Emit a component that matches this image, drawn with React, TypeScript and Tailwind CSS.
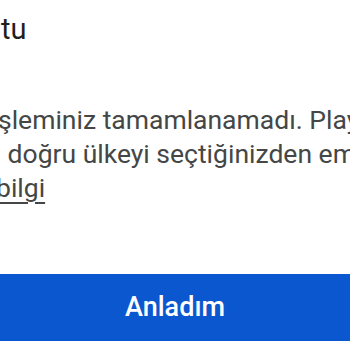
import React from "react";

function Line({
  prefix,
  rest,
  shift,
  className,
}: {
  prefix: string;
  rest: string;
  shift: string;
  className?: string;
}) {
  return (
    <div className={`flex whitespace-nowrap ${shift} ${className ?? ""}`}>
      <span className="w-0 shrink-0 flex justify-end">
        <span className="whitespace-pre">{prefix}</span>
      </span>
      <span className="whitespace-pre">{rest}</span>
    </div>
  );
}

export default function App() {
  return (
    <div
      className="w-[350px] h-[350px] overflow-hidden bg-white flex flex-col"
      style={{ fontFamily: "Roboto, 'Noto Sans', sans-serif" }}
    >
      <div className="pt-[11px] text-[29px] leading-[36px] font-normal text-[#1f1f1f]">
        <Line prefix="Bir hata oluş " rest="tu" shift="ml-[1px]" />
      </div>
      <div className="mt-[56px] text-[26.5px] leading-[34px] text-[#444746]">
        <Line prefix="İ" rest="şleminiz tamamlanamadı. Play" shift="ml-[-2px]" />
        <Line prefix="Store'da" rest=" doğru ülkeyi seçtiğinizden emin olun." shift="ml-[1px]" />
        <Line prefix="Daha fazla " rest="bilgi" shift="ml-[-4px]" className="underline underline-offset-[5px] decoration-[1.5px]" />
      </div>
      <div className="mt-[69px] h-[67px] shrink-0 bg-[#0b57d0] flex items-center justify-center">
        <span className="text-white text-[27px] font-medium leading-none">Anladım</span>
      </div>
    </div>
  );
}
